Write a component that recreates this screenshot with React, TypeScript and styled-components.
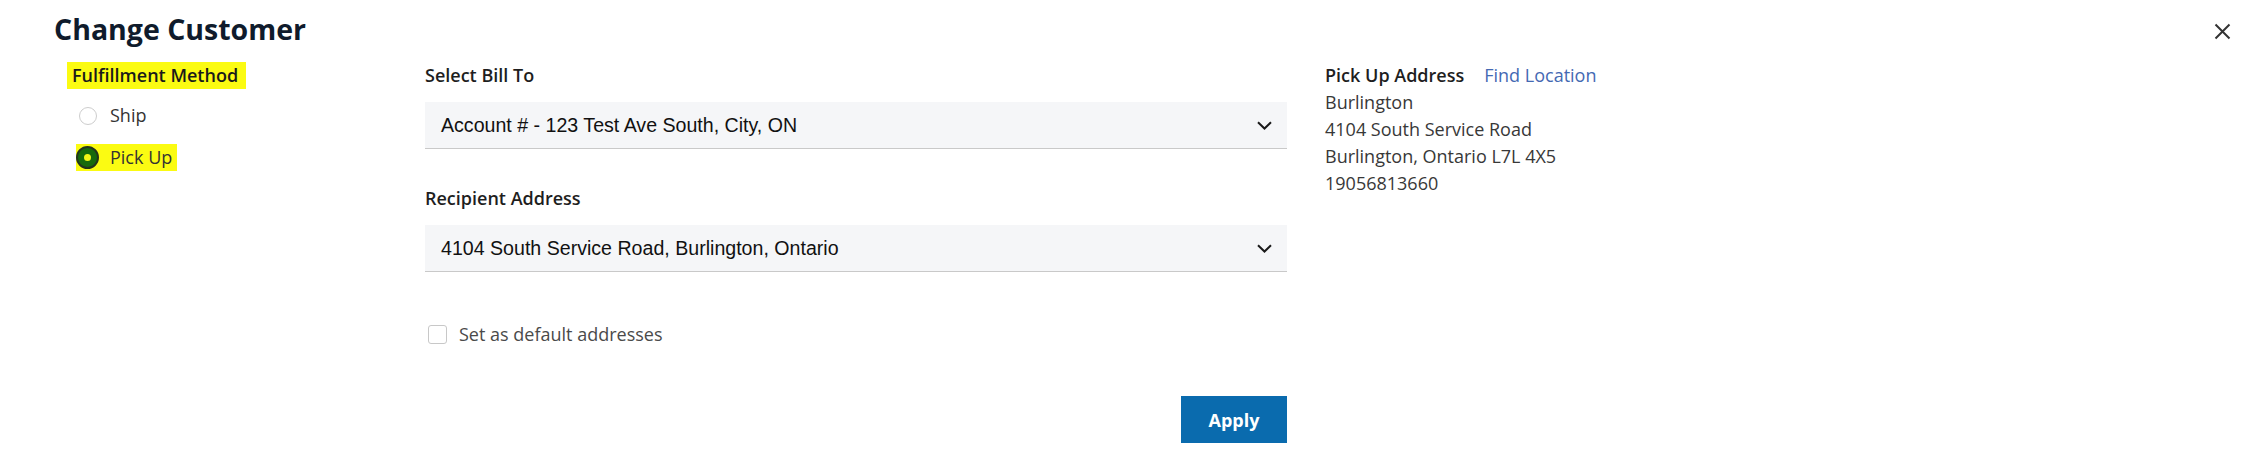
import React, { useState } from "react";
import styled, { createGlobalStyle } from "styled-components";

const GlobalStyle = createGlobalStyle`
  body {
    margin: 0;
    background: #ffffff;
    font-family: "Open Sans", "Liberation Sans", sans-serif;
  }
`;

const Page = styled.main`
  box-sizing: border-box;
  width: 100%;
  height: 449px;
  padding: 12px 24px 0 54px;
  color: #222;
`;

const Header = styled.header`
  display: flex;
  justify-content: space-between;
  align-items: flex-start;
`;

const Title = styled.h1`
  margin: 0;
  font-size: 28.5px;
  line-height: 34px;
  font-weight: 700;
  color: #0f1b2c;
`;

const CloseBtn = styled.button`
  margin-top: 11px;
  padding: 0;
  width: 17px;
  height: 17px;
  border: none;
  background: transparent;
  cursor: pointer;
  display: flex;

  > svg {
    width: 17px;
    height: 17px;
  }
`;

const Body = styled.section`
  display: grid;
  grid-template-columns: 320px 862px auto;
  column-gap: 38px;
  margin: 16px 0 0 13px;
`;

const Column = styled.div`
  display: flex;
  flex-direction: column;
  align-items: flex-start;
`;

const MiddleColumn = styled(Column)`
  align-items: stretch;
`;

const Marker = styled.span`
  display: inline-block;
  padding: 0 8px 0 5px;
  background: #fbfb12;
  font-size: 18px;
  line-height: 27px;
  font-weight: 600;
  color: #1a1a1a;
`;

const RadioList = styled.div`
  display: flex;
  flex-direction: column;
  align-items: flex-start;
  gap: 15px;
  margin-top: 13px;
`;

const RadioRow = styled.label<{ $marked?: boolean }>`
  display: inline-flex;
  align-items: center;
  gap: 11px;
  height: 27px;
  margin-left: 9px;
  padding-right: ${(p) => (p.$marked ? "5px" : "0")};
  background: ${(p) => (p.$marked ? "#fbfb12" : "transparent")};
  font-size: 18px;
  line-height: 27px;
  color: #333;
  cursor: pointer;
`;

const RadioDot = styled.span<{ $checked?: boolean }>`
  position: relative;
  box-sizing: border-box;
  flex: none;
  width: ${(p) => (p.$checked ? "23px" : "18px")};
  height: ${(p) => (p.$checked ? "23px" : "18px")};
  margin: ${(p) => (p.$checked ? "0" : "0 2px 0 3px")};
  border-radius: 50%;
  border: ${(p) => (p.$checked ? "2px solid #23351b" : "1px solid #cdcdcd")};
  background: ${(p) => (p.$checked ? "#186a0c" : "#fff")};

  &::after {
    content: "";
    display: ${(p) => (p.$checked ? "block" : "none")};
    position: absolute;
    left: 50%;
    top: 50%;
    width: 7px;
    height: 7px;
    margin: -3.5px 0 0 -3.5px;
    border-radius: 50%;
    background: #f4f416;
  }
`;

const FieldLabel = styled.div<{ $first?: boolean }>`
  margin-top: ${(p) => (p.$first ? "0" : "36px")};
  font-size: 18px;
  line-height: 27px;
  font-weight: 600;
  color: #1e1e1e;
`;

const SelectBox = styled.div`
  box-sizing: border-box;
  display: flex;
  align-items: center;
  justify-content: space-between;
  height: 47px;
  margin-top: 13px;
  padding: 0 15px 0 16px;
  background: #f5f6f8;
  border-bottom: 1px solid #c9c9c9;
  font-family: "Liberation Sans", Arial, sans-serif;
  font-size: 19.6px;
  color: #111;
  cursor: pointer;

  > svg {
    flex: none;
    width: 15px;
    height: 9px;
  }
`;

const CheckRow = styled.label`
  display: flex;
  align-items: center;
  gap: 12px;
  margin-top: 49px;
  font-size: 18px;
  line-height: 27px;
  color: #4a4a4a;
  cursor: pointer;
`;

const CheckBox = styled.span`
  box-sizing: border-box;
  flex: none;
  width: 19px;
  height: 19px;
  margin-left: 3px;
  border: 1px solid #c8c8c8;
  border-radius: 3px;
  background: #fff;
`;

const ApplyBtn = styled.button`
  align-self: flex-end;
  width: 106px;
  height: 47px;
  margin-top: 48px;
  border: none;
  background: #0a6bae;
  color: #fff;
  font-family: "Open Sans", sans-serif;
  font-size: 18px;
  font-weight: 700;
  cursor: pointer;
`;

const HeadRow = styled.div`
  display: flex;
  align-items: baseline;
  gap: 20px;
  font-size: 18px;
  line-height: 27px;
`;

const HeadTitle = styled.span`
  font-weight: 600;
  color: #1e1e1e;
`;

const FindLink = styled.a`
  color: #4469b3;
  text-decoration: none;
  cursor: pointer;
`;

const AddressLine = styled.div`
  font-size: 18px;
  line-height: 27px;
  color: #383838;
`;

const Chevron = () => (
  <svg viewBox="0 0 15 9" fill="none">
    <path d="M1 1.2l6.5 6.3L14 1.2" stroke="#1a1a1a" strokeWidth="2" />
  </svg>
);

const App = () => {
  const [method, setMethod] = useState("pickup");
  const address = [
    "Burlington",
    "4104 South Service Road",
    "Burlington, Ontario L7L 4X5",
    "19056813660",
  ];

  return (
    <Page>
      <GlobalStyle />
      <Header>
        <Title>Change Customer</Title>
        <CloseBtn aria-label="Close">
          <svg viewBox="0 0 17 17" fill="none">
            <path d="M1.5 1.5l14 14M15.5 1.5l-14 14" stroke="#333" strokeWidth="2" />
          </svg>
        </CloseBtn>
      </Header>
      <Body>
        <Column>
          <Marker>Fulfillment Method</Marker>
          <RadioList>
            <RadioRow onClick={() => setMethod("ship")} $marked={method === "ship"}>
              <RadioDot $checked={method === "ship"} />
              Ship
            </RadioRow>
            <RadioRow onClick={() => setMethod("pickup")} $marked={method === "pickup"}>
              <RadioDot $checked={method === "pickup"} />
              Pick Up
            </RadioRow>
          </RadioList>
        </Column>
        <MiddleColumn>
          <FieldLabel $first>Select Bill To</FieldLabel>
          <SelectBox>
            <span>Account # - 123 Test Ave South, City, ON</span>
            <Chevron />
          </SelectBox>
          <FieldLabel>Recipient Address</FieldLabel>
          <SelectBox>
            <span>4104 South Service Road, Burlington, Ontario</span>
            <Chevron />
          </SelectBox>
          <CheckRow>
            <CheckBox />
            Set as default addresses
          </CheckRow>
          <ApplyBtn>Apply</ApplyBtn>
        </MiddleColumn>
        <Column>
          <HeadRow>
            <HeadTitle>Pick Up Address</HeadTitle>
            <FindLink>Find Location</FindLink>
          </HeadRow>
          {address.map((line) => (
            <AddressLine key={line}>{line}</AddressLine>
          ))}
        </Column>
      </Body>
    </Page>
  );
};

export default App;
